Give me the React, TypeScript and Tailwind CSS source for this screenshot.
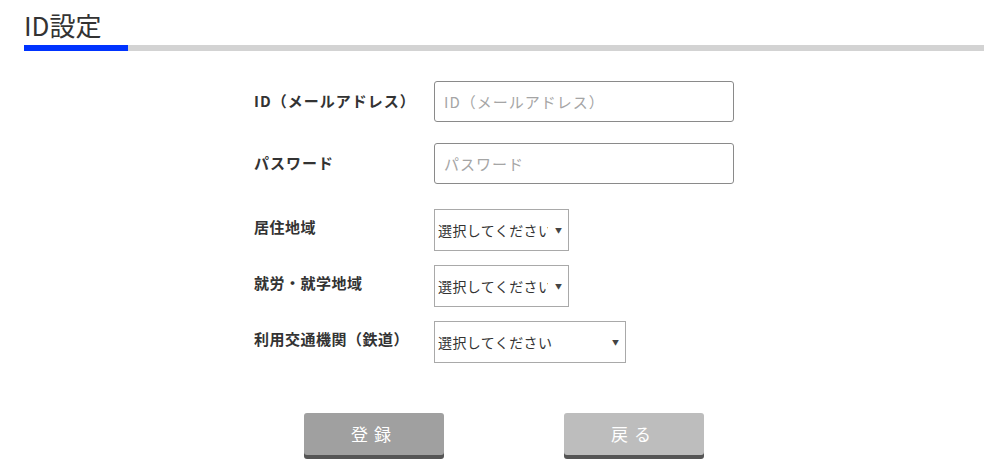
import { useState } from 'react';

const font = { fontFamily: '"Noto Sans CJK JP", "Noto Sans", sans-serif' };

type SelectProps = { width: string; options: string[] };

function SelectBox({ width, options }: SelectProps) {
  const [value, setValue] = useState('');
  return (
    <div className={`relative h-[42px] ${width}`}>
      <select
        value={value}
        onChange={(e) => setValue(e.target.value)}
        className="h-full w-full appearance-none border border-[#a9a9a9] bg-white pl-[3px] pr-5 text-[14px] tracking-[0.4px] text-[#333] outline-none"
        style={font}
      >
        <option value="">選択してください</option>
        {options.map((o) => (
          <option key={o} value={o}>
            {o}
          </option>
        ))}
      </select>
      <span className="pointer-events-none absolute right-[7px] top-1/2 -translate-y-1/2 text-[7px] text-[#444]">
        ▼
      </span>
    </div>
  );
}

export default function App() {
  return (
    <div className="min-h-[472px] bg-white pl-6 pr-5 text-[#333]" style={font}>
      <h1 className="pt-[9px] text-[26px] font-normal leading-[32px] text-[#333]">ID設定</h1>
      <div className="mt-[4px] flex h-[6px] bg-[#d3d3d3]">
        <div className="w-[104px] bg-[#0033ff]" />
      </div>

      <form className="ml-[230px] mt-[30px]" onSubmit={(e) => e.preventDefault()}>
        <div className="flex items-center">
          <label className="w-[180px] text-[15px] font-bold tracking-[1px]">ID（メールアドレス）</label>
          <input
            type="text"
            placeholder="ID（メールアドレス）"
            className="h-[41px] w-[300px] rounded-[3px] border border-[#8a8a8a] px-[9px] text-[15px] tracking-[1px] outline-none placeholder:text-[#a5a5a5]"
          />
        </div>
        <div className="mt-[21px] flex items-center">
          <label className="w-[180px] text-[15px] font-bold tracking-[1px]">パスワード</label>
          <input
            type="password"
            placeholder="パスワード"
            className="h-[41px] w-[300px] rounded-[3px] border border-[#8a8a8a] px-[9px] text-[15px] tracking-[1px] outline-none placeholder:text-[#a5a5a5]"
          />
        </div>

        <div className="mt-[25px] flex items-start">
          <label className="w-[180px] pt-[7px] text-[15px] font-bold tracking-[0.5px]">居住地域</label>
          <SelectBox width="w-[135px]" options={['東京都', '神奈川県', '埼玉県', '千葉県']} />
        </div>
        <div className="mt-[14px] flex items-start">
          <label className="w-[180px] pt-[7px] text-[15px] font-bold tracking-[0.5px]">就労・就学地域</label>
          <SelectBox width="w-[135px]" options={['東京都', '神奈川県', '埼玉県', '千葉県']} />
        </div>
        <div className="mt-[14px] flex items-start">
          <label className="w-[180px] pt-[7px] text-[15px] font-bold tracking-[0.5px]">利用交通機関（鉄道）</label>
          <SelectBox width="w-[192px]" options={['JR線', '東京メトロ', '都営地下鉄', '私鉄']} />
        </div>
      </form>

      <div className="mt-[50px] flex justify-center gap-[120px]">
        <button
          type="button"
          className="h-[42px] w-[140px] rounded-[3px] bg-[#a0a0a0] text-[17px] tracking-[0.35em] text-white shadow-[0_4px_0_#555]"
        >
          登録
        </button>
        <button
          type="button"
          className="h-[42px] w-[140px] rounded-[3px] bg-[#bdbdbd] text-[17px] tracking-[0.35em] text-white shadow-[0_4px_0_#555]"
        >
          戻る
        </button>
      </div>
    </div>
  );
}
